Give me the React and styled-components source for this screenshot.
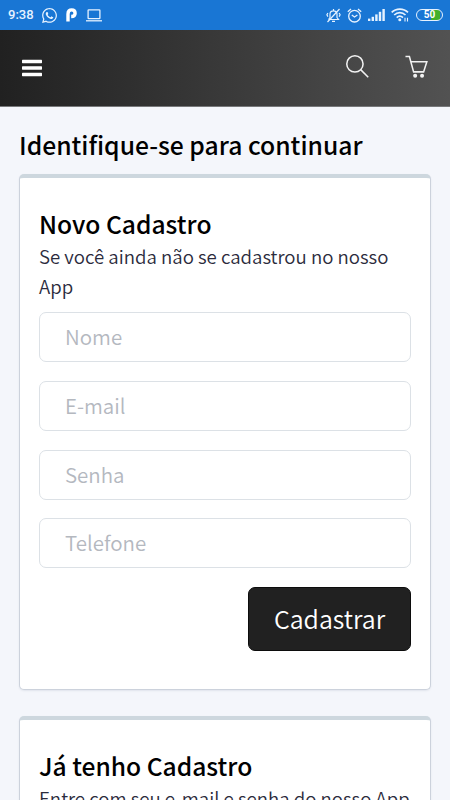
import React from 'react';
import styled, { createGlobalStyle } from 'styled-components';
import { FaWhatsapp } from 'react-icons/fa';

const GlobalStyle = createGlobalStyle`
  * {
    box-sizing: border-box;
  }

  body {
    margin: 0;
    background: #f4f6fb;
    font-family: 'Noto Sans CJK SC', sans-serif;
    overflow: hidden;
  }
`;

const Screen = styled.div`
  width: 450px;
  height: 800px;
  overflow: hidden;
  background: #f4f6fb;
`;

//Status bar
const StatusBar = styled.div`
  height: 30px;
  padding: 0 7px 0 8px;
  background: #1976d4;
  color: #e6f2ff;

  display: flex;
  align-items: center;
  justify-content: space-between;
`;

const StatusGroup = styled.div`
  display: flex;
  align-items: center;
  gap: ${props => props.$gap}px;

  svg {
    display: block;
  }
`;

const Clock = styled.span`
  width: 24px;
  font-family: Roboto, sans-serif;
  font-size: 13px;
  font-weight: 500;
  line-height: 30px;
  white-space: nowrap;
`;

const Battery = styled.div`
  width: 27px;
  height: 12px;
  margin-left: 1px;
  border: 1.3px solid #e6f2ff;
  border-radius: 6px;
  background: linear-gradient(90deg, #1976d4 0 55%, #43b02a 55% 92%, #1976d4 92%);

  font-family: Roboto, sans-serif;
  font-size: 10px;
  font-weight: 700;
  line-height: 9.5px;
  text-align: center;
  color: #ffffff;
`;

//Header
const Header = styled.header`
  height: 77px;
  padding: 0 22px;
  border-bottom: 1px solid #77787a;
  background: linear-gradient(90deg, #212121, #525252);

  display: flex;
  align-items: center;
  justify-content: space-between;
`;

const IconButton = styled.button`
  padding: 0;
  border: 0;
  background: none;
  cursor: pointer;

  svg {
    display: block;
  }
`;

const HeaderActions = styled.div`
  display: flex;
  align-items: center;
  gap: 36px;
  padding-bottom: 3px;
`;

//Content
const Main = styled.main`
  padding: 22px 19px 0;
`;

const Title = styled.h1`
  margin: 0 0 14px;
  font-size: 24.7px;
  font-weight: 500;
  line-height: 31px;
  white-space: nowrap;
  color: #000000;
`;

const Card = styled.section`
  height: 516px;
  margin-bottom: 26px;
  padding: 29px 19px 0;
  border: 1px solid #ccd2dc;
  border-top: 4px solid #cdd7de;
  border-radius: 5px;
  background: #ffffff;
  box-shadow: 0 1px 2px rgba(60, 80, 110, 0.1);
`;

const CardTitle = styled.h2`
  margin: 0 0 2px;
  font-size: 24.6px;
  font-weight: 500;
  line-height: 32px;
  white-space: nowrap;
  color: #000000;
`;

const Description = styled.p`
  margin: 0 -2px 11.4px 0;
  font-size: 18.63px;
  font-weight: 350;
  line-height: 30px;
  color: #2b2b3c;
`;

const Form = styled.form`
  display: flex;
  flex-direction: column;
`;

const Input = styled.input`
  width: 100%;
  height: 50px;
  margin-bottom: 18.7px;
  padding: 0 25px 2px;
  border: 1px solid #dce1e6;
  border-radius: 7px;
  background: #ffffff;

  font-family: inherit;
  font-size: 20.5px;
  font-weight: 350;
  color: #212134;
  outline: none;

  &::placeholder {
    color: #b4b8bf;
    opacity: 1;
  }
`;

const Button = styled.button`
  align-self: flex-end;
  width: 163px;
  height: 64px;
  padding: 0 0 2px;
  border: 1px solid #0c0c0c;
  border-radius: 7px;
  background: #212121;

  font-family: inherit;
  font-size: 24.9px;
  font-weight: 350;
  color: #ffffff;
  cursor: pointer;
`;

const MenuIcon = () => (
  <svg width="20" height="18" viewBox="0 0 20 18" fill="#ffffff">
    <rect y="0.8" width="20" height="3.4" rx="0.6" />
    <rect y="7.3" width="20" height="3.4" rx="0.6" />
    <rect y="13.8" width="20" height="3.4" rx="0.6" />
  </svg>
);

const SearchIcon = () => (
  <svg width="23" height="23" viewBox="0 0 24 24" fill="none" stroke="#f2f2f2" strokeWidth="1.6">
    <circle cx="9.3" cy="9.3" r="8.5" />
    <path d="M15.3 15.3L23.2 23.2" />
  </svg>
);

const CartIcon = () => (
  <svg width="23" height="23" viewBox="0 0 24 24" fill="none" stroke="#f2f2f2" strokeWidth="1.6">
    <path d="M0.5 1.5H4.6L9 17.6H19.4L22.8 7H6.2" />
    <circle cx="10.6" cy="21.6" r="2.1" fill="#f2f2f2" stroke="none" />
    <circle cx="17.8" cy="21.6" r="2.1" fill="#f2f2f2" stroke="none" />
  </svg>
);

const ParkingIcon = () => (
  <svg width="11" height="14" viewBox="0 0 11 14" fill="none" stroke="#ffffff" strokeWidth="3.4">
    <path d="M2 13.5V6C2 3 3.6 1.9 5.7 1.9C8 1.9 9.1 3.3 9.1 5.2C9.1 7.3 8 8.5 5.2 8.5" />
  </svg>
);

const LaptopIcon = () => (
  <svg width="16" height="13" viewBox="0 0 16 13" fill="none" stroke="#e6f2ff" strokeWidth="1.3">
    <rect x="2.1" y="0.8" width="11.8" height="8.9" rx="0.6" />
    <path d="M0 11.8H16" />
  </svg>
);

const MutedBellIcon = () => (
  <svg width="15" height="15" viewBox="0 0 15 15" fill="none" stroke="#e6f2ff" strokeWidth="1.2">
    <path d="M2.5 11.5H12.5L11 9.5V6.2C11 4.2 9.5 2.8 7.5 2.8S4 4.2 4 6.2V9.5L2.5 11.5M6 13.4H9M7.5 1V2.8" />
    <path d="M13.5 1L1.5 14" />
    <path d="M1.9 5L0.9 6.8L1.9 8.6M13.1 5L14.1 6.8L13.1 8.6" />
  </svg>
);

const AlarmIcon = () => (
  <svg width="15" height="15" viewBox="0 0 15 15" fill="none" stroke="#e6f2ff" strokeWidth="1.3">
    <circle cx="7.5" cy="8.2" r="5.8" />
    <path d="M0.8 3.8L4 1M14.2 3.8L11 1M4.8 7L7.5 9L10.4 7" />
  </svg>
);

const SignalIcon = () => (
  <svg width="17" height="12" viewBox="0 0 17 12" fill="#e6f2ff">
    <rect x="0" y="9.6" width="2.4" height="2.4" />
    <rect x="3.6" y="7.8" width="2.4" height="4.2" />
    <rect x="7.2" y="5.4" width="2.4" height="6.6" />
    <rect x="10.8" y="2.8" width="2.4" height="9.2" />
    <rect x="14.4" y="0" width="2.4" height="12" />
  </svg>
);

const WifiIcon = () => (
  <svg width="18" height="14" viewBox="0 0 18 14" fill="none" stroke="#e6f2ff" strokeWidth="1.7">
    <path d="M0.7 4.4C5 0 12.6 0 17 4.4M3.2 7C6.4 3.8 11.2 3.8 14.5 7M5.7 9.6C7.5 7.8 10.1 7.8 12 9.6" />
    <circle cx="8.8" cy="11.8" r="1.5" fill="#e6f2ff" stroke="none" />
    <path d="M14 9.8V13.5M16.5 9.8V13.5" strokeWidth="1.1" />
  </svg>
);

const fields = [
  { name: 'nome', label: 'Nome', type: 'text' },
  { name: 'email', label: 'E-mail', type: 'email' },
  { name: 'senha', label: 'Senha', type: 'password' },
  { name: 'telefone', label: 'Telefone', type: 'tel' },
];

function App() {
  return (
    <Screen>
      <GlobalStyle />
      <StatusBar>
        <StatusGroup $gap={8.5}>
          <Clock>9:38</Clock>
          <FaWhatsapp size={17} />
          <ParkingIcon />
          <LaptopIcon />
        </StatusGroup>
        <StatusGroup $gap={6}>
          <MutedBellIcon />
          <AlarmIcon />
          <SignalIcon />
          <WifiIcon />
          <Battery>50</Battery>
        </StatusGroup>
      </StatusBar>
      <Header>
        <IconButton aria-label="Menu"><MenuIcon /></IconButton>
        <HeaderActions>
          <IconButton aria-label="Buscar"><SearchIcon /></IconButton>
          <IconButton aria-label="Carrinho"><CartIcon /></IconButton>
        </HeaderActions>
      </Header>
      <Main>
        <Title>Identifique-se para continuar</Title>
        <Card>
          <CardTitle>Novo Cadastro</CardTitle>
          <Description>Se você ainda não se cadastrou no nosso App</Description>
          <Form onSubmit={e => e.preventDefault()}>
            {fields.map(field => (
              <Input key={field.name} name={field.name} type={field.type} placeholder={field.label} />
            ))}
            <Button type="submit">Cadastrar</Button>
          </Form>
        </Card>
        <Card>
          <CardTitle>Já tenho Cadastro</CardTitle>
          <Description>Entre com seu e-mail e senha do nosso App</Description>
        </Card>
      </Main>
    </Screen>
  );
}

export default App;
